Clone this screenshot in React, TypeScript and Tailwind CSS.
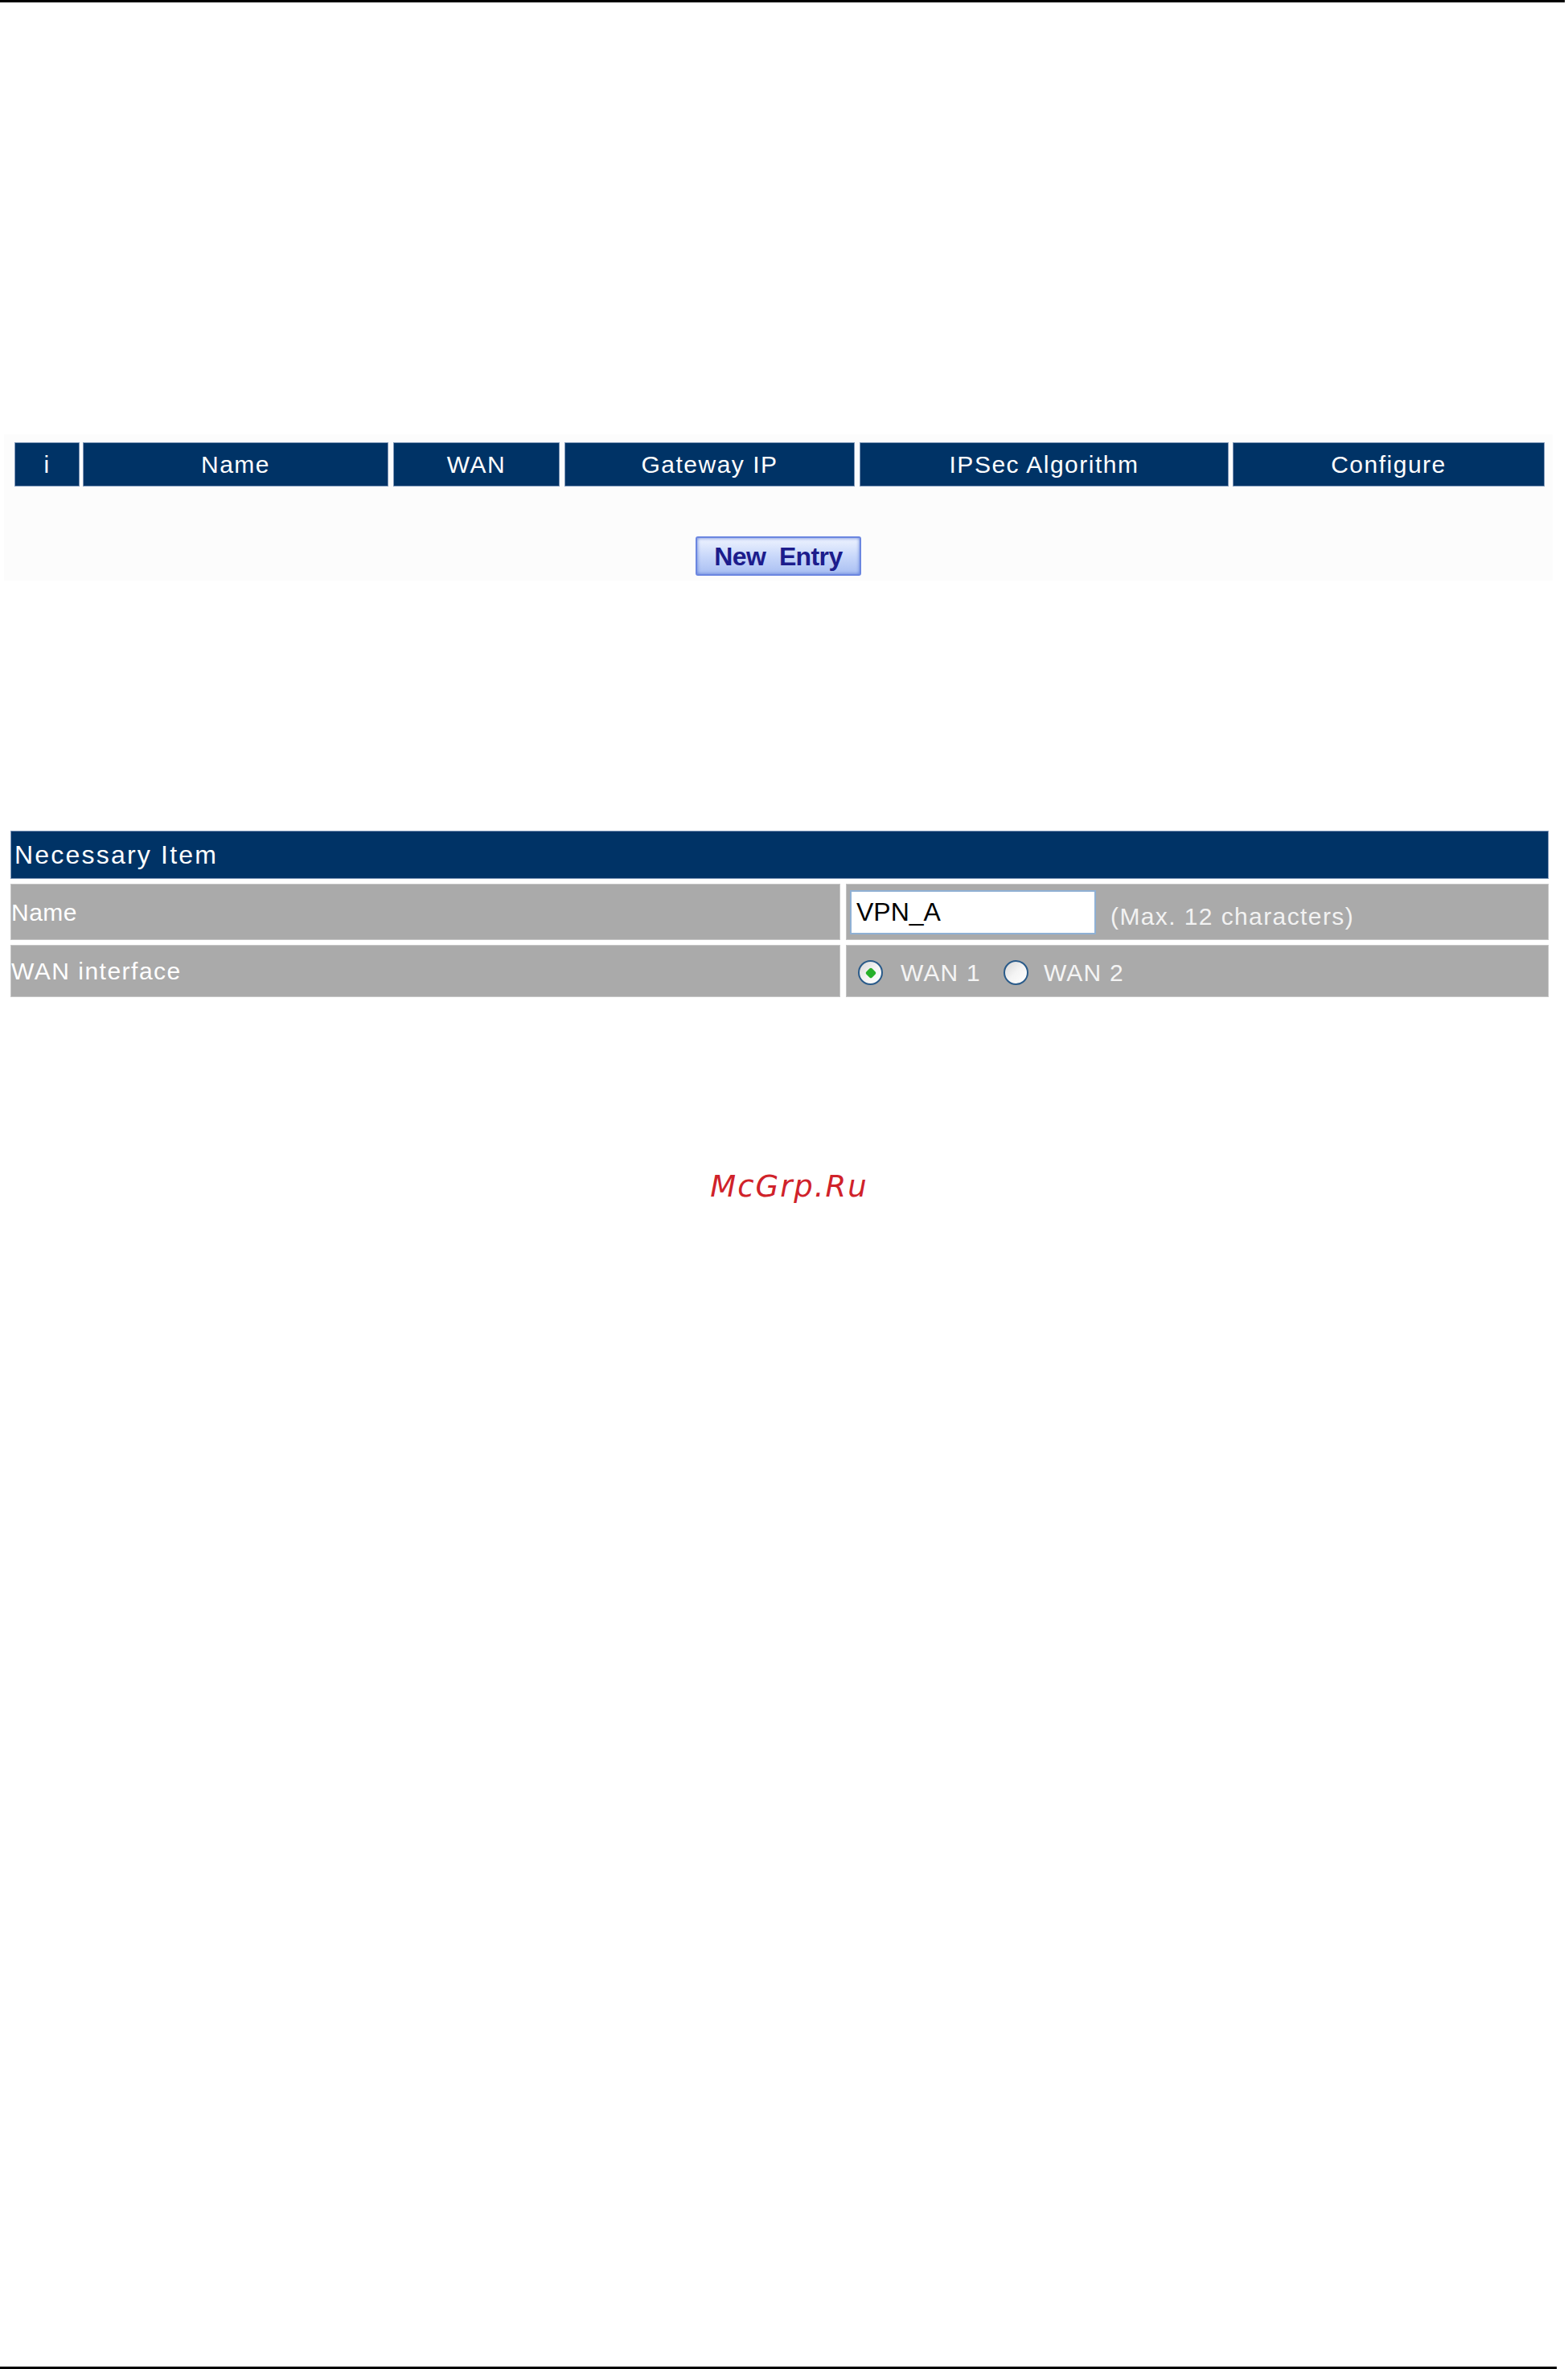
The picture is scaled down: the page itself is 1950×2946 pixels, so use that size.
import React from "react";

const sans = { fontFamily: '"Liberation Sans", Arial, sans-serif' };

type Col = { label: string; w: string; ml: string };

const columns: Col[] = [
  { label: "i", w: "w-[81px]", ml: "ml-0" },
  { label: "Name", w: "w-[380px]", ml: "ml-[4px]" },
  { label: "WAN", w: "w-[207px]", ml: "ml-[6px]" },
  { label: "Gateway IP", w: "w-[361px]", ml: "ml-[6px]" },
  { label: "IPSec Algorithm", w: "w-[459px]", ml: "ml-[6px]" },
  { label: "Configure", w: "w-[388px]", ml: "ml-[5px]" },
];

function Radio({ checked }: { checked?: boolean }) {
  return (
    <span className="flex h-[31px] w-[31px] shrink-0 items-center justify-center rounded-full border-[2px] border-[#2a5b8a] bg-gradient-to-br from-[#d8d8d8] via-[#f4f4f4] to-white">
      {checked && <span className="h-[10px] w-[10px] rotate-45 rounded-[2px] bg-[#27b02a]" />}
    </span>
  );
}

export default function App() {
  return (
    <div className="flex h-[2946px] w-[1950px] flex-col bg-white" style={sans}>
      {/* page rule */}
      <div className="h-[3px] w-[1946px] bg-black" />

      {/* tunnel list */}
      <div className="ml-[5px] mt-[537px] flex w-[1926px] flex-col bg-[#fcfcfc] pb-[6px] pt-[10px]">
        <div className="ml-[13px] flex h-[55px]">
          {columns.map((c) => (
            <div
              key={c.label}
              className={`${c.w} ${c.ml} flex items-center justify-center border border-[#7f97b8] bg-[#003366] text-[30px] tracking-[1.5px] text-white`}
            >
              {c.label}
            </div>
          ))}
        </div>
        <div className="mt-[62px] flex justify-center">
          <button className="flex h-[49px] w-[206px] items-center justify-center rounded-[3px] border-[2px] border-[#6b86e0] bg-gradient-to-b from-[#eef3fe] via-[#c9d8fa] to-[#a9bff2] text-[32px] font-bold tracking-[-0.6px] text-[#1c1c8c] shadow-[inset_0_0_4px_#5b7ad8]">
            New&nbsp;&nbsp;Entry
          </button>
        </div>
      </div>

      {/* necessary item form */}
      <div className="ml-[13px] mt-[311px] flex w-[1913px] flex-col">
        <div className="flex h-[60px] items-center border border-[#7f97b8] bg-[#003366] pl-[4px] text-[32px] tracking-[2.2px] text-white">
          Necessary Item
        </div>
        <div className="mt-[6px] flex h-[70px]">
          <div className="flex w-[1032px] items-center border border-[#c4c4c4] bg-[#aaaaaa] text-[30px] tracking-[0.5px] text-white">
            Name
          </div>
          <div className="ml-[7px] flex flex-1 items-center border border-[#c4c4c4] bg-[#aaaaaa]">
            <div className="ml-[4px] flex h-[55px] w-[306px] items-center border-[2px] border-[#8fb0d4] bg-white pl-[6px] text-[32px] text-black">
              VPN_A
            </div>
            <span className="ml-[18px] mt-[10px] text-[30px] tracking-[1.4px] text-[#f2f2f2]">
              (Max. 12 characters)
            </span>
          </div>
        </div>
        <div className="mt-[6px] flex h-[65px]">
          <div className="flex w-[1032px] items-center border border-[#c4c4c4] bg-[#aaaaaa] text-[30px] tracking-[1.5px] text-white">
            WAN interface
          </div>
          <div className="ml-[7px] flex flex-1 items-center border border-[#c4c4c4] bg-[#aaaaaa] pt-[4px] text-[30px] tracking-[1.2px] text-[#f4f4f4]">
            <span className="ml-[14px]">
              <Radio checked />
            </span>
            <span className="ml-[22px]">WAN 1</span>
            <span className="ml-[28px]">
              <Radio />
            </span>
            <span className="ml-[19px]">WAN 2</span>
          </div>
        </div>
      </div>

      {/* watermark */}
      <div className="mt-[217px] flex justify-center pl-[13px]">
        <span
          className="text-[37px] leading-none tracking-[2px] text-[#d0222a] italic"
          style={{ fontFamily: '"DejaVu Sans", sans-serif' }}
        >
          McGrp.Ru
        </span>
      </div>

      {/* page rule */}
      <div className="mt-auto h-[3px] w-[1936px] bg-black" />
    </div>
  );
}
